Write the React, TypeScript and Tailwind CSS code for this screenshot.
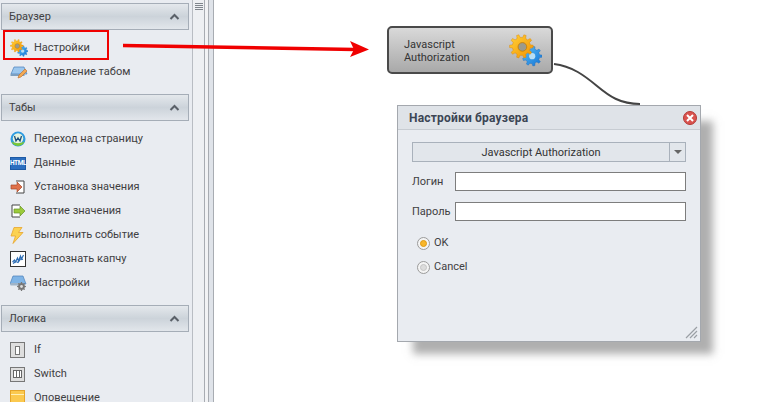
import React from "react";

// teeth ring for the gear icons
const gearPath = (cx: number, cy: number, r: number, teeth: number) => {
  const out: string[] = [];
  const step = (Math.PI * 2) / teeth;
  for (let i = 0; i < teeth; i++) {
    const a = i * step;
    const pts: [number, number][] = [
      [r * 0.76, a - step * 0.5],
      [r * 0.76, a - step * 0.28],
      [r, a - step * 0.16],
      [r, a + step * 0.16],
      [r * 0.76, a + step * 0.28],
    ];
    pts.forEach(([rad, ang]) => {
      out.push(`${(cx + rad * Math.cos(ang)).toFixed(2)} ${(cy + rad * Math.sin(ang)).toFixed(2)}`);
    });
  }
  return `M${out.join("L")}Z`;
};

const SectionHeader = ({ title }: { title: string }) => (
  <div className="h-[27px] ml-px mr-[3px] border border-[#a5adb7] bg-gradient-to-b from-[#e4e8ec] via-[#ccd3da] to-[#e2e6eb] flex items-center justify-between pl-[7px] pr-[8px] text-[#3f4042]">
    <span className="pt-[2px]">{title}</span>
    <svg width="11" height="7" viewBox="0 0 11 7">
      <path d="M1.5 6 L5.5 2 L9.5 6" fill="none" stroke="#5a6068" strokeWidth="2" />
    </svg>
  </div>
);

const Row = ({ icon, text }: { icon: React.ReactNode; text: string }) => (
  <div className="h-[24px] flex items-center text-[#3f4042]">
    <div className="w-[34px] pl-[10px] shrink-0 flex items-center">{icon}</div>
    <span className="pt-px">{text}</span>
  </div>
);

const GearsIcon = ({ size, id }: { size: number; id: string }) => (
  <svg width={size} height={size} viewBox="0 0 32 32">
    <defs>
      <linearGradient id={`${id}o`} x1="0" y1="0" x2="1" y2="1">
        <stop offset="0" stopColor="#ffd23a" />
        <stop offset="1" stopColor="#f39200" />
      </linearGradient>
      <linearGradient id={`${id}b`} x1="0" y1="0" x2="1" y2="1">
        <stop offset="0" stopColor="#5cc0f5" />
        <stop offset="1" stopColor="#1273d6" />
      </linearGradient>
    </defs>
    <path d={gearPath(22.5, 21.5, 9.5, 9)} fill={`url(#${id}b)`} stroke="#1a68b8" strokeWidth="0.4" />
    <circle cx="22.5" cy="21.5" r="3" fill="#b7def5" />
    <path d={gearPath(12, 12, 11.5, 10)} fill={`url(#${id}o)`} stroke="#d98200" strokeWidth="0.4" />
    <circle cx="13" cy="12.5" r="4.2" fill="#9c9a8a" stroke="#c87e00" strokeWidth="0.8" />
  </svg>
);

const GlobeIcon = () => (
  <svg width="16" height="16" viewBox="0 0 16 16">
    <circle cx="8" cy="8" r="7.5" fill="#2e9be0" />
    <circle cx="8" cy="7.5" r="5.2" fill="#e6f4e0" />
    <path d="M1.5 10.5a7 7 0 0 0 13 0a8 4 0 0 1-13 0z" fill="#7cc832" />
    <path d="M4.5 5l1.5 5 2-3 2 3 1.5-5" fill="none" stroke="#1f4f7a" strokeWidth="1.3" />
  </svg>
);

const HtmlIcon = () => (
  <div className="w-[16px] h-[13px] bg-[#2c6fc0] border border-[#1d5aa5] flex items-center justify-center text-white text-[6.5px] font-bold leading-none tracking-[-0.4px]">
    HTML
  </div>
);

const SetIcon = () => (
  <svg width="16" height="14" viewBox="0 0 16 14">
    <path d="M6 1h8v12H6" fill="#fff" stroke="#444" />
    <path d="M1 5h6V2l5 5-5 5V9H1z" fill="#e0714a" stroke="#a5482a" strokeWidth="0.7" />
  </svg>
);

const GetIcon = () => (
  <svg width="16" height="14" viewBox="0 0 16 14">
    <path d="M10 1H2v12h8" fill="#fff" stroke="#444" />
    <path d="M4 5h6V2l5 5-5 5V9H4z" fill="#9ccb3b" stroke="#64902a" strokeWidth="0.7" />
  </svg>
);

const BoltIcon = () => (
  <svg width="14" height="17" viewBox="0 0 14 17">
    <path d="M4 0.5h8L8.5 5.5H13L3 16.5 5.5 9H1z" fill="#fbd252" stroke="#e8a52c" strokeWidth="0.8" />
  </svg>
);

const CaptchaIcon = () => (
  <svg width="16" height="16" viewBox="0 0 16 16">
    <rect x="0.5" y="0.5" width="15" height="15" fill="#fff" stroke="#333" />
    <path d="M2.5 11l2-2 1 2 2-4 1 3 2-5 1 3 2-4M3 12.5l3-2 2 1 3-4 2 1" fill="none" stroke="#2d6db5" strokeWidth="1.2" />
  </svg>
);

const TabSettingsIcon = () => (
  <svg width="17" height="16" viewBox="0 0 17 16">
    <path d="M3 1h10l3 8H0z" fill="#7fb4e6" stroke="#4a80b8" strokeWidth="0.7" />
    <rect x="0.5" y="8" width="13" height="2.5" fill="#9fb4c8" />
    <path d={gearPath(11.5, 11.5, 4.5, 8)} fill="#777" />
    <circle cx="11.5" cy="11.5" r="1.4" fill="#ddd" />
  </svg>
);

const TabEditIcon = () => (
  <svg width="18" height="15" viewBox="0 0 18 15">
    <path d="M4 2h10l3 7H1z" fill="#9cc7ee" stroke="#4a80b8" strokeWidth="0.7" />
    <rect x="0.5" y="9" width="14" height="2" fill="#7d9fc0" />
    <path d="M8 13l1-3 6-6 2 2-6 6z" fill="#f3a953" stroke="#b8692a" strokeWidth="0.6" />
  </svg>
);

const IfIcon = () => (
  <div className="w-[15px] h-[16px] border border-[#777] bg-[#dedede] flex items-center justify-center">
    <div className="w-[5px] h-[9px] border border-[#777] bg-white" />
  </div>
);

const SwitchIcon = () => (
  <div className="w-[15px] h-[15px] border border-[#777] bg-[#dedede] flex items-center justify-center">
    <div className="w-[9px] h-[8px] border border-[#666] bg-[linear-gradient(90deg,#fff_0_2px,#666_2px_3px,#fff_3px_5px,#666_5px_6px,#fff_6px)]" />
  </div>
);

const NotifyIcon = () => (
  <div className="w-[15px] h-[16px] bg-[#fbc94f] border border-[#e5a52a] border-b-0">
    <div className="mt-[3px] h-px bg-[#fff0b8]" />
  </div>
);

const Radio = ({ checked, label }: { checked?: boolean; label: string }) => (
  <div className="h-[24px] flex items-center gap-[4px] pl-[5px] text-[#3f4042]">
    <div className="w-[13px] h-[13px] rounded-full border border-[#9b9b9b] bg-[#f4f4f4] flex items-center justify-center">
      <div className={checked ? "w-[7px] h-[7px] rounded-full bg-[#f8b62a] border border-[#e09a10]" : "w-[7px] h-[7px] rounded-full bg-[#dcdcdc] border border-[#c4c4c4]"} />
    </div>
    <span>{label}</span>
  </div>
);

const Field = ({ label }: { label: string }) => (
  <div className="h-[19px] flex items-center text-[#3f4042]">
    <span className="w-[43px] shrink-0 pt-[2px]">{label}</span>
    <div className="flex-1 h-[19px] bg-white border border-[#7d7d7d]" />
  </div>
);

export default function App() {
  return (
    <div className="relative w-[780px] h-[402px] overflow-hidden bg-white flex font-['Roboto','Noto_Sans',sans-serif] text-[11px]">
      <aside className="w-[193px] shrink-0 bg-[#e9ecf1] border-r border-[#b9bdc3] pt-[3px] overflow-hidden">
        <SectionHeader title="Браузер" />
        <div className="pt-[6px] pb-[10px]">
          <Row icon={<GearsIcon size={18} id="a" />} text="Настройки" />
          <Row icon={<TabEditIcon />} text="Управление табом" />
        </div>
        <SectionHeader title="Табы" />
        <div className="pt-[6px] pb-[10px]">
          <Row icon={<GlobeIcon />} text="Переход на страницу" />
          <Row icon={<HtmlIcon />} text="Данные" />
          <Row icon={<SetIcon />} text="Установка значения" />
          <Row icon={<GetIcon />} text="Взятие значения" />
          <Row icon={<BoltIcon />} text="Выполнить событие" />
          <Row icon={<CaptchaIcon />} text="Распознать капчу" />
          <Row icon={<TabSettingsIcon />} text="Настройки" />
        </div>
        <SectionHeader title="Логика" />
        <div className="pt-[6px]">
          <Row icon={<IfIcon />} text="If" />
          <Row icon={<SwitchIcon />} text="Switch" />
          <Row icon={<NotifyIcon />} text="Оповещение" />
        </div>
      </aside>

      <div className="w-[11px] shrink-0 bg-[#eef0f3] flex flex-col items-center pt-[3px] gap-px">
        <div className="w-[8px] h-px bg-[#7f858c]" />
        <div className="w-[8px] h-px bg-[#7f858c]" />
        <div className="w-[8px] h-px bg-[#7f858c]" />
        <div className="w-[8px] h-px bg-[#7f858c]" />
      </div>
      <div className="w-[10px] shrink-0 bg-[#dfe3e9] border-x border-[#a8acb2]">
        <div className="w-[4px] h-full bg-[#f2f3f5] border-r border-[#a8acb2]" />
      </div>

      {/* red callout over the list */}
      <div className="absolute left-[3px] top-[30px] w-[106px] h-[30px] border-[2px] border-[#f00000]" />
      <svg className="absolute left-0 top-0" width="780" height="402">
        <path d="M123 45.5 L355 49.5" stroke="#f00000" strokeWidth="3.5" fill="none" />
        <path d="M350 41 L369 49.5 L350 57 L354 49.5z" fill="#f00000" />
        <path d="M554 64 C572 66 585 76 597 86 S620 104 640 104" stroke="#444" strokeWidth="2" fill="none" />
      </svg>

      {/* node on the canvas */}
      <div className="absolute left-[387px] top-[26px] w-[166px] h-[48px] rounded-[5px] border-2 border-[#4a4a4a] bg-gradient-to-b from-[#d9d9d9] to-[#a9a9a9] flex items-center justify-between pl-[15px] pr-[9px] text-[#333]">
        <span className="leading-[13px] pt-[2px]">Javascript<br />Authorization</span>
        <GearsIcon size={33} id="b" />
      </div>

      {/* dialog */}
      <div className="absolute left-[397px] top-[105px] w-[304px] h-[237px] bg-[#e9ecf1] border border-[#a4a8ae] shadow-[14px_14px_8px_-2px_rgba(110,110,110,0.55)] flex flex-col">
        <div className="h-[24px] shrink-0 bg-[#dfe3e8] border-b border-[#c7ccd2] flex items-center justify-between pl-[11px] pr-[3px]">
          <span className="font-bold text-[#3b4554] text-[12px] tracking-[0.2px]">Настройки браузера</span>
          <div className="w-[14px] h-[14px] rounded-full bg-[#d9534f] border border-[#b53a36] flex items-center justify-center text-white">
            <svg width="8" height="8" viewBox="0 0 8 8">
              <path d="M1 1l6 6M7 1L1 7" stroke="#fff" strokeWidth="2" />
            </svg>
          </div>
        </div>
        <div className="flex-1 relative px-[14px] pt-[12px]">
          <div className="h-[20px] border border-[#a9b1bb] bg-[#e2e6eb] flex items-center text-[#333]">
            <span className="flex-1 text-center pt-[2px]">Javascript Authorization</span>
            <div className="w-[16px] h-full border-l border-[#a9b1bb] flex items-center justify-center">
              <div className="w-0 h-0 border-x-[4px] border-x-transparent border-t-[4px] border-t-[#666]" />
            </div>
          </div>
          <div className="mt-[10px] flex flex-col gap-[11px]">
            <Field label="Логин" />
            <Field label="Пароль" />
          </div>
          <div className="mt-[10px]">
            <Radio checked label="OK" />
            <Radio label="Cancel" />
          </div>
          <svg className="absolute right-[2px] bottom-[2px]" width="13" height="13" viewBox="0 0 13 13">
            <path d="M12 1L1 12M12 5L5 12M12 9L9 12" stroke="#9a9fa5" strokeWidth="1.2" />
          </svg>
        </div>
      </div>
    </div>
  );
}
